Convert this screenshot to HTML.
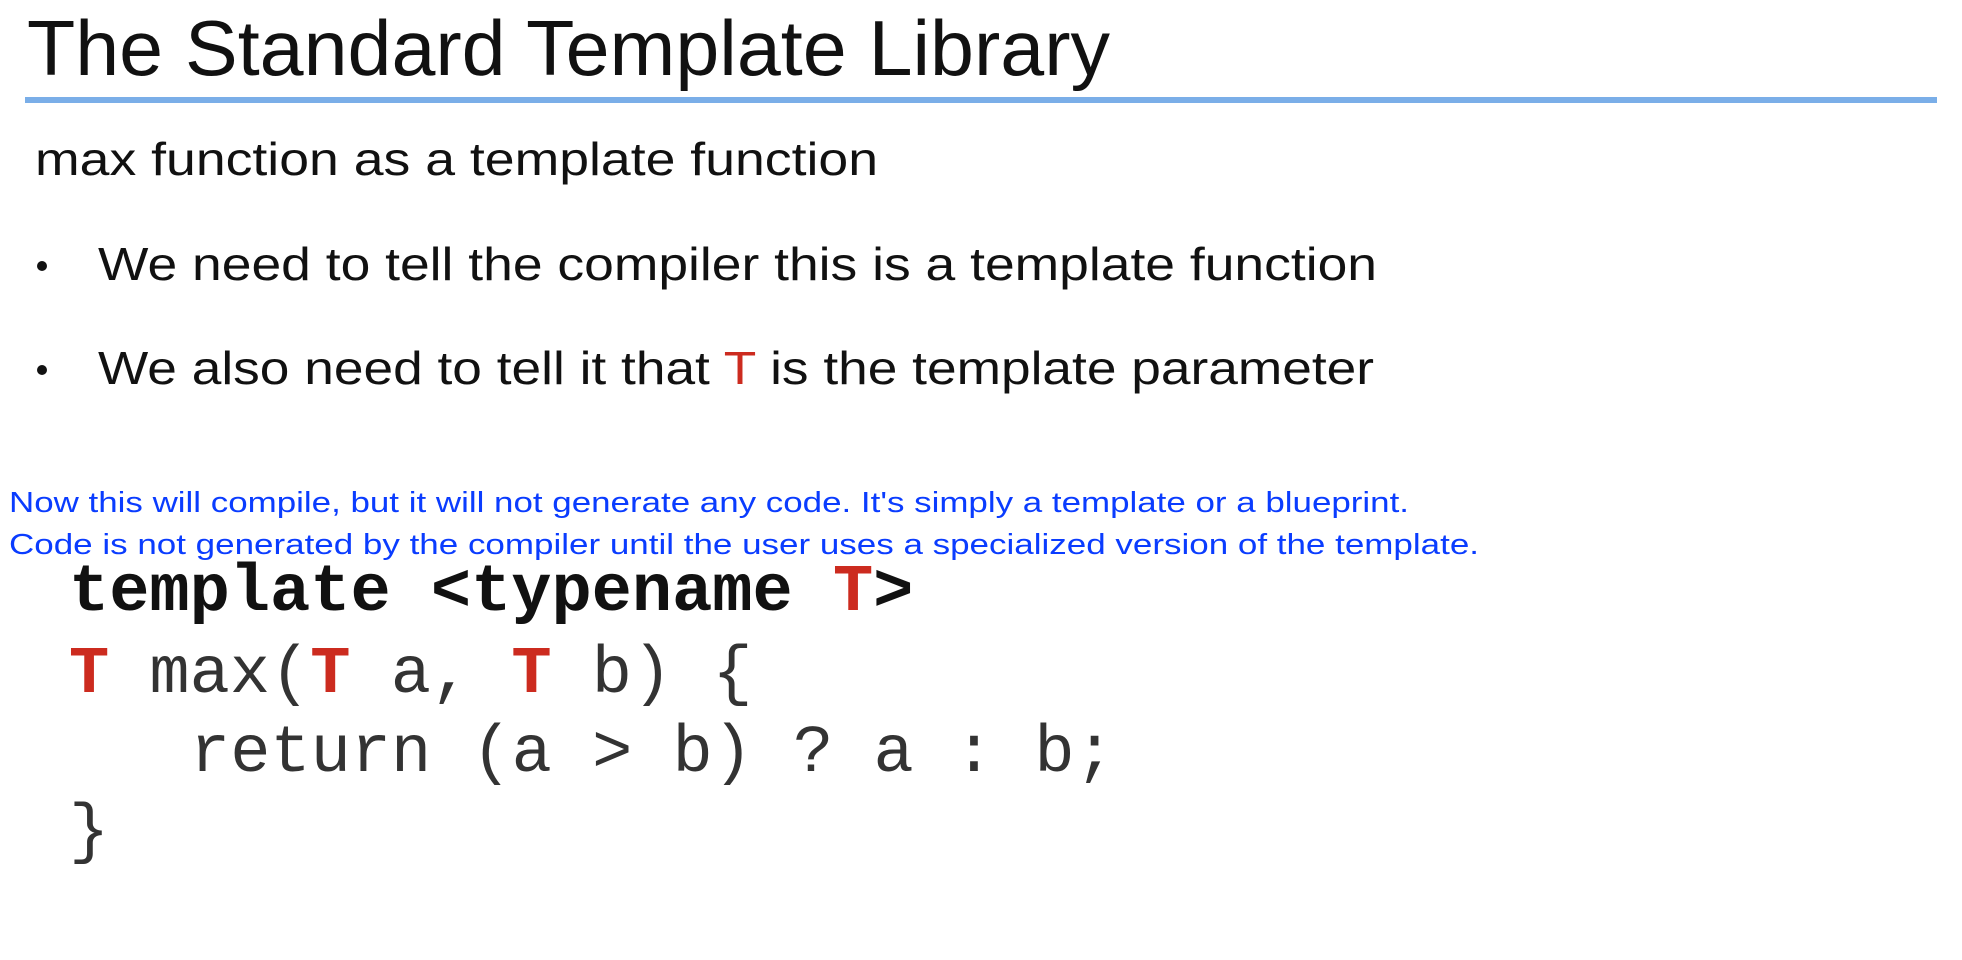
<!DOCTYPE html>
<html><head><meta charset="utf-8"><style>
html,body{margin:0;padding:0;background:#fff;}
svg{display:block;}
</style></head><body>
<svg width="1962" height="960" xmlns="http://www.w3.org/2000/svg">
<text x="27" y="75" font-family="Liberation Sans, sans-serif" font-size="78" fill="#111" textLength="1083" lengthAdjust="spacingAndGlyphs">The Standard Template Library</text>
<rect x="25" y="97" width="1912" height="6" fill="#7aaee8"/>
<text x="35" y="175" font-family="Liberation Sans, sans-serif" font-size="46" fill="#111" textLength="843" lengthAdjust="spacingAndGlyphs">max function as a template function</text>
<circle cx="42" cy="266" r="5" fill="#111"/>
<text x="98" y="280" font-family="Liberation Sans, sans-serif" font-size="46" fill="#111" textLength="1279" lengthAdjust="spacingAndGlyphs">We need to tell the compiler this is a template function</text>
<circle cx="42" cy="370" r="5" fill="#111"/>
<text x="98" y="384" font-family="Liberation Sans, sans-serif" font-size="46" fill="#111" textLength="1276" lengthAdjust="spacingAndGlyphs">We also need to tell it that <tspan fill="#cc2b1f">T</tspan> is the template parameter</text>
<text x="9" y="512" font-family="Liberation Sans, sans-serif" font-size="29" fill="#0a3cff" textLength="1400" lengthAdjust="spacingAndGlyphs">Now this will compile, but it will not generate any code. It's simply a template or a blueprint.</text>
<text x="9" y="554" font-family="Liberation Sans, sans-serif" font-size="29" fill="#0a3cff" textLength="1470" lengthAdjust="spacingAndGlyphs">Code is not generated by the compiler until the user uses a specialized version of the template.</text>
<g font-family="Liberation Mono, monospace" font-size="67">
<text x="69" y="610" font-weight="bold" fill="#111">template &lt;typename <tspan fill="#cc2b1f">T</tspan>&gt;</text>
<text x="69" y="692" fill="#333"><tspan fill="#cc2b1f" font-weight="bold">T</tspan> max(<tspan fill="#cc2b1f" font-weight="bold">T</tspan> a, <tspan fill="#cc2b1f" font-weight="bold">T</tspan> b) {</text>
<text x="190" y="771" fill="#333">return (a &gt; b) ? a : b;</text>
<text x="69" y="850" fill="#333">}</text>
</g>
</svg>
</body></html>
